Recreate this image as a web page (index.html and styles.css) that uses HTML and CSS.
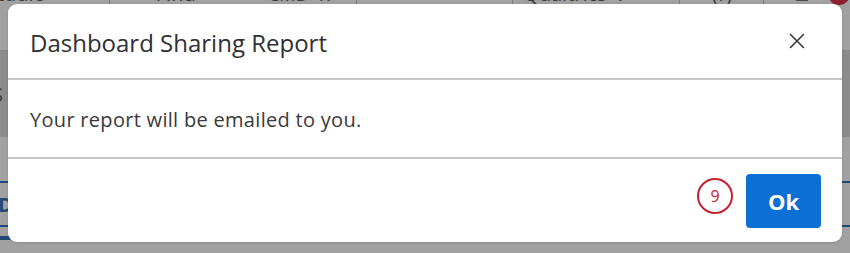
FILE: index.html
```html
<!DOCTYPE html>
<html lang="en">
<head>
<meta charset="utf-8">
<title>Dashboard Sharing Report</title>
<link rel="stylesheet" href="styles.css">
</head>
<body>
<div class="app">
  <div class="topbar">
    <span class="tb-item tb-brand">Studio</span>
    <span class="tb-item tb-find">Find<span class="tb-kbd">CMD+K</span></span>
    <span class="tb-item tb-spacer"></span>
    <span class="tb-item tb-org">Qualtrics ⌄</span>
    <span class="tb-item tb-help">(?)</span>
    <span class="tb-item tb-box">□</span>
    <span class="tb-avatar"></span>
  </div>
  <div class="subbar"></div>
  <div class="band"><span class="band-text">S</span></div>
  <div class="gap"></div>
  <div class="tabrow"><span class="tab-text">D</span></div>
  <div class="bottomrow">
    <span class="bbar bbar-a"></span>
    <span class="bbar bbar-b"></span>
  </div>
</div>

<div class="modal" role="dialog" aria-labelledby="mtitle">
  <div class="modal-header">
    <h2 class="modal-title" id="mtitle">Dashboard Sharing Report</h2>
    <button class="close-btn" aria-label="Close">
      <svg width="16" height="16" viewBox="0 0 16 16"><path d="M1.5 1.5 L14.5 14.5 M14.5 1.5 L1.5 14.5" stroke="#3a3a3a" stroke-width="1.6" fill="none" stroke-linecap="round"/></svg>
    </button>
  </div>
  <div class="modal-body">
    <p class="modal-text">Your report will be emailed to you.</p>
  </div>
  <div class="modal-footer">
    <span class="step-badge">9</span>
    <button class="ok-btn">Ok</button>
  </div>
</div>
</body>
</html>
```
FILE: styles.css
```css
html, body {
  margin: 0;
  padding: 0;
  width: 850px;
  height: 253px;
  overflow: hidden;
}
body {
  background: #a1a1a1;
  font-family: "Open Sans", "Noto Sans", sans-serif;
  position: relative;
}

/* dimmed app behind the dialog */
.app {
  display: flex;
  flex-direction: column;
  height: 253px;
}
.topbar {
  display: flex;
  align-items: flex-end;
  height: 22px;
  margin-top: -17px;
  font-size: 20px;
  line-height: 22px;
  color: #3a3a3a;
  flex: none;
}
.tb-item {
  display: flex;
  height: 22px;
  border-right: 1px solid #7a7a7a;
  white-space: nowrap;
  overflow: hidden;
}
.tb-brand { width: 110px; text-indent: -14px; }
.tb-find { width: 249px; padding-left: 46px; box-sizing: border-box; justify-content: space-between; padding-right: 26px; }
.tb-kbd { font-size: 18px; }
.tb-spacer { width: 157px; }
.tb-org { width: 169px; padding-left: 10px; box-sizing: border-box; }
.tb-help { width: 85px; justify-content: center; box-sizing: border-box; }
.tb-box { width: 44px; justify-content: flex-end; border-right: none; }
.tb-avatar {
  width: 22px;
  height: 22px;
  border-radius: 50%;
  background: #8e1f2c;
  margin-left: 20px;
  flex: none;
}
.subbar {
  height: 45px;
  border-bottom: 1px solid #878787;
  flex: none;
}
.band {
  height: 86px;
  background: #8c8c8c;
  flex: none;
  display: flex;
  align-items: center;
  font-size: 20px;
  color: #3a3a3a;
}
.band-text { margin-left: -8px; }
.gap {
  height: 44px;
  border-bottom: 2px solid #1f4a78;
  flex: none;
}
.tabrow {
  height: 42px;
  border-bottom: 2px solid #1f4a78;
  flex: none;
  display: flex;
  align-items: center;
  font-size: 20px;
  font-weight: 700;
  color: #1f4a78;
}
.tab-text { margin-left: -2px; }
.bottomrow {
  display: flex;
  gap: 14px;
  padding-top: 9px;
  flex: none;
}
.bbar {
  height: 4px;
  background: #1f4a78;
}
.bbar-a { width: 286px; }
.bbar-b { width: 363px; }

/* modal */
.modal {
  position: absolute;
  left: 8px;
  top: 4px;
  width: 834px;
  height: 238px;
  background: #ffffff;
  border-radius: 9px;
  display: flex;
  flex-direction: column;
  box-shadow: 0 1px 3px rgba(0,0,0,0.12);
}
.modal-header {
  height: 74px;
  border-bottom: 2px solid #c6c6c6;
  display: flex;
  align-items: center;
  justify-content: space-between;
  padding: 0 37px 0 22px;
  flex: none;
}
.modal-title {
  margin: 0;
  font-size: 24px;
  font-weight: 400;
  color: #303030;
  line-height: 30px;
  position: relative;
  top: 2px;
}
.close-btn {
  border: none;
  background: none;
  padding: 0;
  width: 16px;
  height: 16px;
  display: flex;
  cursor: pointer;
}
.modal-body {
  height: 77px;
  border-bottom: 2px solid #c6c6c6;
  display: flex;
  align-items: center;
  padding: 0 22px;
  flex: none;
}
.modal-text {
  margin: 0;
  font-size: 20px;
  letter-spacing: 0.3px;
  color: #3a3a3a;
  line-height: 26px;
  position: relative;
  top: 1px;
}
.modal-footer {
  flex: 1;
  display: flex;
  align-items: flex-start;
  justify-content: flex-end;
  padding: 15px 21px 0 0;
  gap: 13px;
}
.step-badge {
  width: 32px;
  height: 32px;
  border: 2.5px solid #c8202f;
  border-radius: 50%;
  color: #c8202f;
  font-size: 16px;
  display: flex;
  align-items: center;
  justify-content: center;
  margin-top: 4px;
  line-height: 1;
}
.ok-btn {
  width: 75px;
  height: 54px;
  border: none;
  border-radius: 4px;
  background: #0b6fd4;
  color: #ffffff;
  font-family: "Open Sans", "Noto Sans", sans-serif;
  font-size: 22px;
  font-weight: 700;
  padding: 0;
  cursor: pointer;
}
```
